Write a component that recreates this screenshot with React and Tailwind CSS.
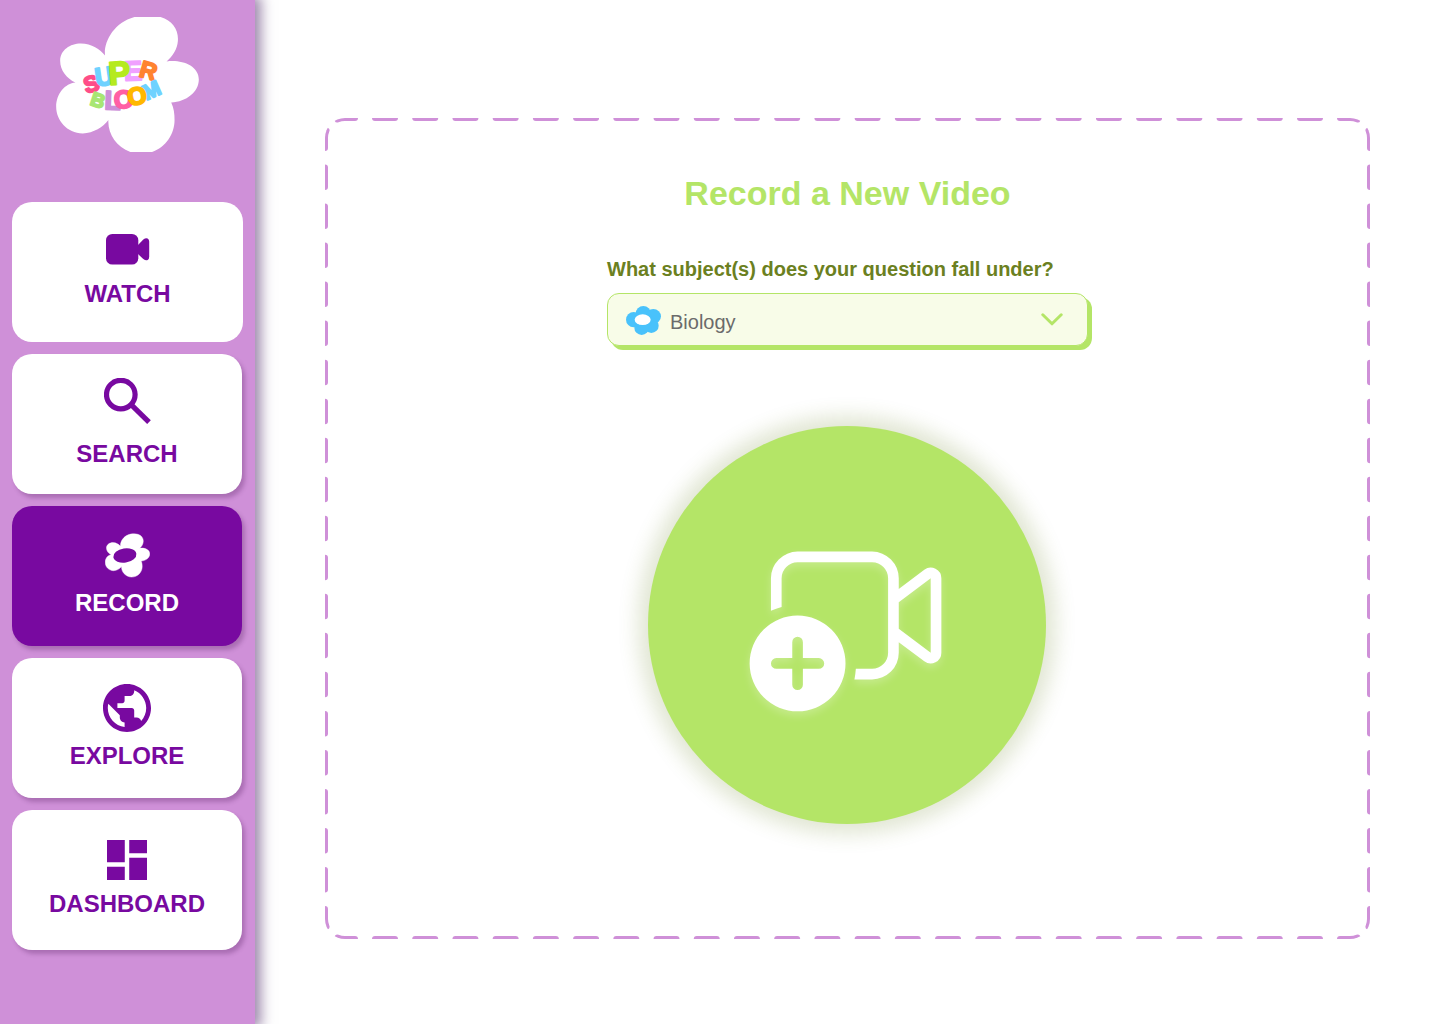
import React from "react";

const FLOWER =
  "M165 136 C160 96 192 32 262 18 C345 4 388 42 384 92 C382 116 370 136 350 154 C392 147 447 165 447 208 C447 245 410 275 364 277 C372 295 374 310 374 330 C374 384 332 432 270 432 C212 428 172 380 175 330 C160 350 130 370 98 370 C50 370 18 330 18 290 C18 250 45 220 76 217 C50 205 30 180 30 152 C30 120 60 100 92 100 C125 100 150 118 165 136Z";

const LETTERS = [
  { ch: "S", cx: 124, cy: 221, size: 68, rotate: -16, color: "#ff4d88" },
  { ch: "U", cx: 163, cy: 198, size: 78, rotate: -8, color: "#6fd2ff" },
  { ch: "E", cx: 249, cy: 181, size: 82, rotate: -2, color: "#f0a0ff" },
  { ch: "P", cx: 208, cy: 188, size: 98, rotate: -4, color: "#b5ea1e" },
  { ch: "R", cx: 296, cy: 181, size: 70, rotate: 16, color: "#ff8330" },
  { ch: "L", cx: 188, cy: 270, size: 80, rotate: 2, color: "#cd8fd9" },
  { ch: "B", cx: 144, cy: 270, size: 58, rotate: 18, color: "#a8e673" },
  { ch: "O", cx: 221, cy: 267, size: 76, rotate: -4, color: "#ff5fa5" },
  { ch: "M", cx: 304, cy: 240, size: 64, rotate: -24, color: "#6fd2ff" },
  { ch: "O", cx: 261, cy: 257, size: 74, rotate: -10, color: "#ffb800" },
];

function Logo() {
  return (
    <svg viewBox="18 20 429 406" className="h-[135px] w-[143px]" role="img" aria-label="Super Bloom">
      <path d={FLOWER} fill="#fff" />
      {LETTERS.map((l, i) => (
        <text
          key={i}
          x={l.cx}
          y={l.cy + l.size * 0.35}
          fontSize={l.size}
          transform={`rotate(${l.rotate} ${l.cx} ${l.cy})`}
          fill={l.color}
          stroke={l.color}
          strokeWidth="6"
          strokeLinejoin="round"
          textAnchor="middle"
          className="font-['Liberation_Sans',Arial,sans-serif] font-bold"
        >
          {l.ch}
        </text>
      ))}
    </svg>
  );
}

const WatchIcon = () => (
  <svg viewBox="0 0 44 31" className="h-[31px] w-11" fill="currentColor" aria-hidden="true">
    <rect width="32.3" height="30.6" rx="6.3" />
    <path d="M31.5 11.5 L37.3 5.6 Q39.6 3.6 41.6 4.4 Q43.2 5.3 43.2 7.8 V22.6 Q43.2 25.2 41.6 26.1 Q39.6 26.8 37.3 25 L31.5 19.6Z" />
  </svg>
);

const SearchIcon = () => (
  <svg viewBox="0 0 47 47" className="size-[47px]" fill="none" stroke="currentColor" strokeWidth="5.2" aria-hidden="true">
    <circle cx="16.8" cy="16.6" r="14.3" />
    <path d="M26.6 26.2 L45 44.2" />
  </svg>
);

const RecordIcon = () => (
  <svg viewBox="16 14 433 420" className="size-[45px]" aria-hidden="true">
    <path d={FLOWER} fill="currentColor" stroke="currentColor" strokeWidth="4" />
    <ellipse cx="207" cy="224" rx="112" ry="68" transform="rotate(-9 207 224)" fill="#7809a0" />
  </svg>
);

const ExploreIcon = () => (
  <svg viewBox="2 2 20 20" className="size-12" fill="currentColor" aria-hidden="true">
    <path d="M12 2C6.48 2 2 6.48 2 12s4.48 10 10 10 10-4.48 10-10S17.52 2 12 2zm-1 17.93c-3.95-.49-7-3.85-7-7.93 0-.62.08-1.21.21-1.79L9 15v1c0 1.1.9 2 2 2v1.93zm6.9-2.54c-.26-.81-1-1.39-1.9-1.39h-1v-3c0-.55-.45-1-1-1H8v-2h2c.55 0 1-.45 1-1V7h2c1.1 0 2-.9 2-2v-.41c2.93 1.19 5 4.06 5 7.41 0 2.08-.8 3.97-2.1 5.39z" />
  </svg>
);

const DashboardIcon = () => (
  <svg viewBox="3 3 18 18" className="size-10" fill="currentColor" aria-hidden="true">
    <path d="M3 13h8V3H3v10zm0 8h8v-6H3v6zm10 0h8V11h-8v10zm0-18v6h8V3h-8z" />
  </svg>
);

const NAV = [
  { label: "WATCH", Icon: WatchIcon, look: "gap-[15px] bg-white text-[#7809a0]" },
  {
    label: "SEARCH",
    Icon: SearchIcon,
    look: "mr-px gap-[15px] bg-white text-[#7809a0] shadow-[3px_4px_4px_rgba(70,20,80,0.27)]",
  },
  {
    label: "RECORD",
    Icon: RecordIcon,
    current: true,
    look: "mr-px gap-[11px] bg-[#7809a0] text-white shadow-[3px_4px_4px_rgba(70,20,80,0.27)]",
  },
  {
    label: "EXPLORE",
    Icon: ExploreIcon,
    look: "mr-px gap-[10px] bg-white text-[#7809a0] shadow-[3px_4px_4px_rgba(70,20,80,0.27)]",
  },
  {
    label: "DASHBOARD",
    Icon: DashboardIcon,
    look: "mr-px gap-[10px] bg-white text-[#7809a0] shadow-[3px_4px_4px_rgba(70,20,80,0.27)]",
  },
];

function Sidebar() {
  return (
    <aside className="z-10 flex w-[255px] shrink-0 flex-col items-center bg-[#cf90d8] px-3 pt-[17px] pb-6 shadow-[2px_0_12px_4px_rgba(60,20,90,0.5)]">
      <Logo />
      <nav className="mt-[50px] flex w-full flex-col gap-3">
        {NAV.map(({ label, Icon, look, current }) => (
          <a
            key={label}
            href={"#" + label.toLowerCase()}
            aria-current={current ? "page" : undefined}
            className={`flex h-[140px] flex-col items-center justify-center rounded-[20px] pb-[2px] text-2xl leading-7 font-bold ${look}`}
          >
            <Icon />
            <span>{label}</span>
          </a>
        ))}
      </nav>
    </aside>
  );
}

function DashedFrame() {
  const corner = "M30 0 H20 A20 20 0 0 0 12.4 1.5 M1.5 12.4 A20 20 0 0 0 0 20 V30";
  return (
    <div className="pointer-events-none absolute inset-0 overflow-hidden rounded-[20px]">
      <svg viewBox="0 0 1045 821" preserveAspectRatio="none" className="h-full w-full" aria-hidden="true">
        <g fill="none" stroke="#cf90d8" strokeWidth="6" strokeLinecap="round">
          <path d="M50 0 H995 M50 821 H995" strokeDasharray="20 20.217" />
          <path d="M0 49.5 V771.5 M1045 49.5 V771.5" strokeDasharray="19.5 19.528" />
          <path d={corner} />
          <path d={corner} transform="translate(1045 0) scale(-1 1)" />
          <path d={corner} transform="translate(0 821) scale(1 -1)" />
          <path d={corner} transform="translate(1045 821) scale(-1 -1)" />
        </g>
      </svg>
    </div>
  );
}

function SubjectSelect() {
  return (
    <div className="w-[481px] max-w-full">
      <label htmlFor="subject" className="block text-xl leading-7 font-bold text-[#6b8021]">
        What subject(s) does your question fall under?
      </label>
      <div className="relative mt-[10px]">
        <select
          id="subject"
          defaultValue="Biology"
          className="block h-[53px] w-full appearance-none rounded-[12px] border border-[#b4e567] bg-[#f8fce8] pt-1 pr-12 pl-[62px] text-xl text-[#6b6b6b] shadow-[4px_4px_0_#b4e567]"
        >
          <option>Biology</option>
        </select>
        <svg viewBox="108 438 105 87" className="pointer-events-none absolute top-[13px] left-[19px] h-[29px] w-[35px]" aria-hidden="true">
          <g fill="#49c2fb">
            <ellipse cx="160" cy="461" rx="23" ry="23" />
            <ellipse cx="190" cy="469" rx="23" ry="22" />
            <ellipse cx="131" cy="479" rx="23" ry="23" />
            <ellipse cx="184" cy="497" rx="22" ry="22" />
            <ellipse cx="155" cy="503" rx="22" ry="22" />
            <ellipse cx="160" cy="480" rx="30" ry="24" />
          </g>
          <ellipse cx="158" cy="479" rx="24" ry="16" fill="#fff" />
        </svg>
        <svg
          viewBox="0 0 22 13"
          className="pointer-events-none absolute top-[20px] right-[25px] h-[13px] w-[22px]"
          fill="none"
          stroke="#b4e567"
          strokeWidth="3"
          strokeLinecap="round"
          strokeLinejoin="round"
          aria-hidden="true"
        >
          <path d="M1.8 1.8 L11 10.8 L20.2 1.8" />
        </svg>
      </div>
    </div>
  );
}

function RecordButton() {
  return (
    <button
      type="button"
      aria-label="Record a new video"
      className="mt-20 mr-px flex size-[398px] items-center justify-center rounded-full bg-[#b4e567] pr-1 pb-5 shadow-[0_0_20px_10px_rgba(107,128,33,0.2)]"
    >
      <svg
        viewBox="0 0 20 20"
        className="size-[213px] drop-shadow-[0_4px_4px_rgba(255,255,255,0.25)]"
        fill="#fff"
        fillRule="evenodd"
        aria-hidden="true"
      >
        <path d="M3 6.5A2.5 2.5 0 0 1 5.5 4h7A2.5 2.5 0 0 1 15 6.5v1l2.4-1.8A1 1 0 0 1 19 6.5v7a1 1 0 0 1-1.6.8L15 12.5v1a2.5 2.5 0 0 1-2.5 2.5h-1.66q.1-.5.13-1h1.53a1.5 1.5 0 0 0 1.5-1.5v-7A1.5 1.5 0 0 0 12.5 5h-7A1.5 1.5 0 0 0 4 6.5v2.7q-.52.13-1 .36zM15 8.75v2.5l3 2.25v-7z" />
        <path d="M10 14.5a4.5 4.5 0 1 1-9 0 4.5 4.5 0 0 1 9 0zM6 12.5a.5.5 0 0 0-1 0V14H3.5a.5.5 0 0 0 0 1H5v1.5a.5.5 0 0 0 1 0V15h1.5a.5.5 0 0 0 0-1H6z" />
      </svg>
    </button>
  );
}

export default function App() {
  return (
    <div className="flex min-h-screen bg-white font-['Liberation_Sans',Arial,sans-serif]">
      <Sidebar />
      <main className="min-w-0 flex-1 px-[70px] pt-[118px] pb-[85px]">
        <section className="relative flex flex-col items-center px-6 pt-[55px] pb-[115px]">
          <DashedFrame />
          <h1 className="mb-[42px] text-[34px] leading-10 font-bold text-[#b4e567]">Record a New Video</h1>
          <SubjectSelect />
          <RecordButton />
        </section>
      </main>
    </div>
  );
}
